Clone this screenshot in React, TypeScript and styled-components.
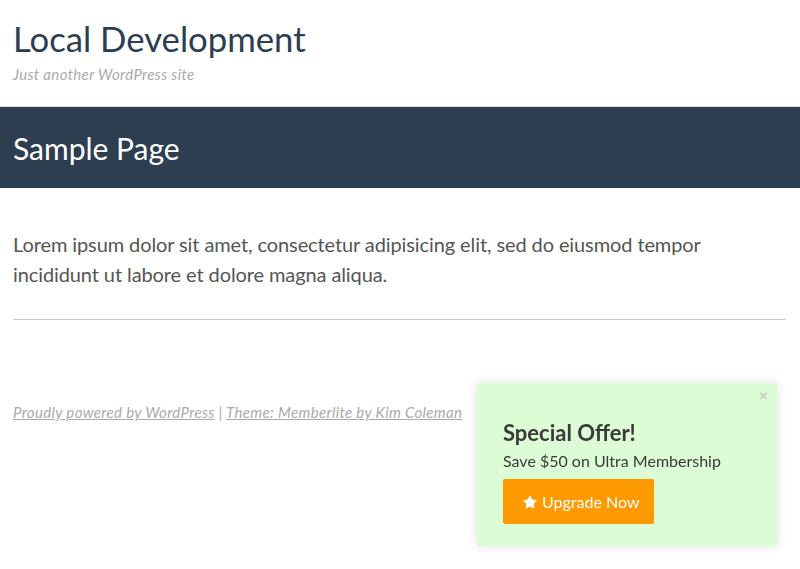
import React from 'react'
import styled, { createGlobalStyle } from 'styled-components'
import { FaStar } from 'react-icons/fa'

const GlobalStyle = createGlobalStyle`
  html, body {
    margin: 0;
    padding: 0;
    background: #fff;
    font-family: Lato, 'Open Sans', sans-serif;
  }
`

const Masthead = styled.header`
  padding: 18px 13px 22px;
  border-bottom: 1px solid #ddd;
`

const SiteTitle = styled.h1`
  margin: 0;
  font-size: 34.7px;
  font-weight: 400;
  line-height: 42px;
  color: #2c3e50;
`

const Tagline = styled.p`
  margin: 4px 0 0;
  font-size: 15px;
  font-style: italic;
  color: #aaaaaa;
  line-height: 20px;
  letter-spacing: 0.35px;
`

const Banner = styled.div`
  background: #2c3e50;
  height: 81px;
  padding: 0 13px;
  display: flex;
  align-items: center;
`

const PageTitle = styled.h2`
  margin: 0;
  font-size: 30px;
  font-weight: 400;
  color: #fff;
`

const Content = styled.main`
  padding: 41px 13px 0 13px;
`

const Paragraph = styled.p`
  margin: 0;
  font-size: 20px;
  line-height: 30px;
  color: #555;
  letter-spacing: -0.1px;
`

const Rule = styled.hr`
  margin: 30px 1px 0 0;
  border: 0;
  border-top: 1px solid #ccc;
`

const Footer = styled.footer`
  padding: 83px 13px 0;
  font-size: 15px;
  font-style: italic;
  color: #aaa;
  letter-spacing: 0.35px;
`

const FooterLink = styled.a`
  color: #aaa;
  text-decoration: underline;
`

const Sep = styled.span`
  color: #aaa;
  font-style: normal;
`

const Popup = styled.div`
  position: fixed;
  left: 477px;
  top: 383px;
  width: 300px;
  height: 163px;
  box-sizing: border-box;
  padding: 36px 26px 0;
  background: #dcfcd6;
  border-radius: 3px;
  box-shadow: 0 0 12px rgba(0, 0, 0, 0.12);
`

const Close = styled.span`
  position: absolute;
  top: 2px;
  right: 9px;
  font-size: 16px;
  font-weight: 700;
  color: #c8c8c8;
`

const OfferTitle = styled.h3`
  margin: 0;
  font-size: 22px;
  font-weight: 700;
  color: #3a3a3a;
  line-height: 28px;
`

const OfferText = styled.p`
  margin: 4px 0 0;
  font-size: 16px;
  color: #3a3a3a;
  line-height: 20px;
`

const Button = styled.a`
  margin-top: 8px;
  display: inline-flex;
  align-items: center;
  justify-content: flex-start;
  gap: 5px;
  height: 45px;
  width: 151px;
  box-sizing: border-box;
  padding-left: 20px;
  background: #ff9900;
  color: #fff;
  font-size: 16px;
  border-radius: 2px;
  text-decoration: none;
`

export default function App() {
  return (
    <>
      <GlobalStyle />
      <Masthead>
        <SiteTitle>Local Development</SiteTitle>
        <Tagline>Just another WordPress site</Tagline>
      </Masthead>
      <Banner>
        <PageTitle>Sample Page</PageTitle>
      </Banner>
      <Content>
        <Paragraph>
          Lorem ipsum dolor sit amet, consectetur adipisicing elit, sed do eiusmod tempor incididunt ut labore et dolore magna aliqua.
        </Paragraph>
        <Rule />
      </Content>
      <Footer>
        <FooterLink href="#">Proudly powered by WordPress</FooterLink> <Sep>|</Sep>{' '}
        <FooterLink href="#">Theme: Memberlite by Kim Coleman</FooterLink>
      </Footer>
      <Popup>
        <Close>×</Close>
        <OfferTitle>Special Offer!</OfferTitle>
        <OfferText>Save $50 on Ultra Membership</OfferText>
        <Button href="#">
          <FaStar size={14} />
          Upgrade Now
        </Button>
      </Popup>
    </>
  )
}
